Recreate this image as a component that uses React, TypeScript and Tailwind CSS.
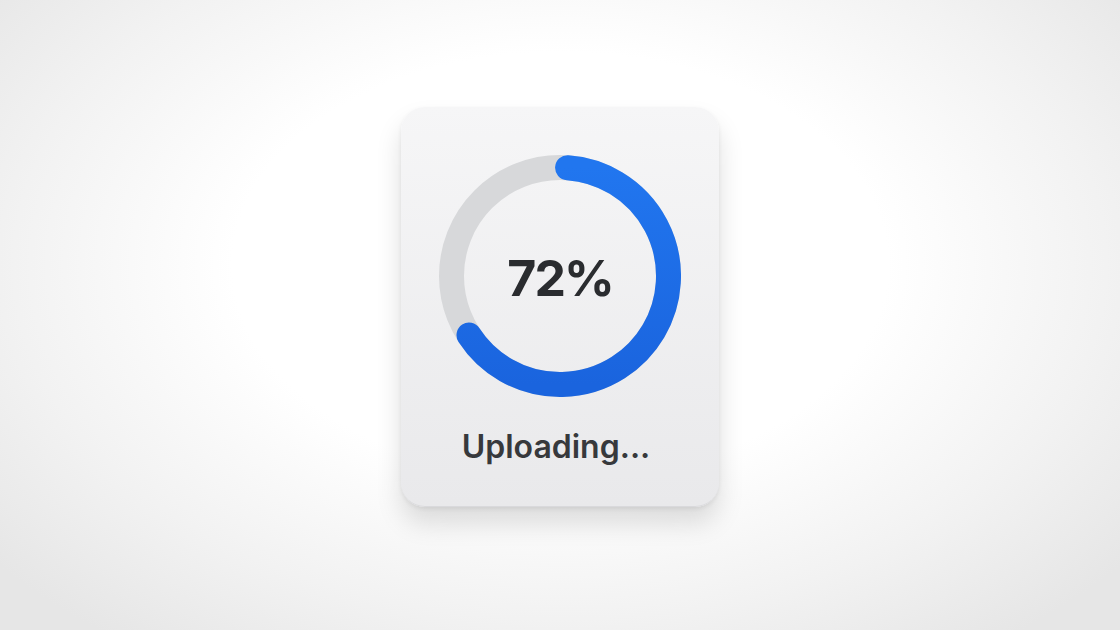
import React from 'react';

const ProgressRing: React.FC<{ label: string }> = ({ label }) => {
  return (
    <div className="relative w-[242px] h-[242px]">
      <svg width="242" height="242" viewBox="0 0 242 242">
        <defs>
          <linearGradient id="ringBlue" x1="0" y1="0" x2="0" y2="1">
            <stop offset="0%" stopColor="#2176ef" />
            <stop offset="100%" stopColor="#1a64de" />
          </linearGradient>
        </defs>
        <circle cx="121" cy="121" r="108.5" fill="none" stroke="#d7d8da" strokeWidth="25" />
        <path
          d="M128.57 12.76 A108.5 108.5 0 1 1 30.0 180.09"
          fill="none"
          stroke="url(#ringBlue)"
          strokeWidth="25"
          strokeLinecap="round"
        />
      </svg>
      <div className="absolute inset-0 flex items-center justify-center pt-[5px]">
        <span className="text-[50px] font-bold tracking-[-2px] text-[#2a2c2f] font-['Inter','Liberation_Sans',sans-serif]">
          {label}
        </span>
      </div>
    </div>
  );
};

export default function App() {
  return (
    <div className="w-full h-[630px] flex justify-center pt-[107px] bg-[radial-gradient(ellipse_65%_75%_at_50%_42%,#ffffff_45%,#f2f2f2_75%,#e6e6e6_100%)]">
      <div className="w-[318px] h-[400px] rounded-[24px] flex flex-col items-center pt-[48px] border-b border-[#d9d9dc] bg-gradient-to-b from-[#f6f6f7] to-[#e9e9eb] shadow-[0_16px_26px_rgba(0,0,0,0.13),0_2px_4px_rgba(0,0,0,0.07)]">
        <ProgressRing label="72%" />
        <div className="mt-[31px] pr-[8px] text-[32px] leading-[38px] font-semibold text-[#37393c] font-['Inter','Liberation_Sans',sans-serif]">
          Uploading...
        </div>
      </div>
    </div>
  );
}
